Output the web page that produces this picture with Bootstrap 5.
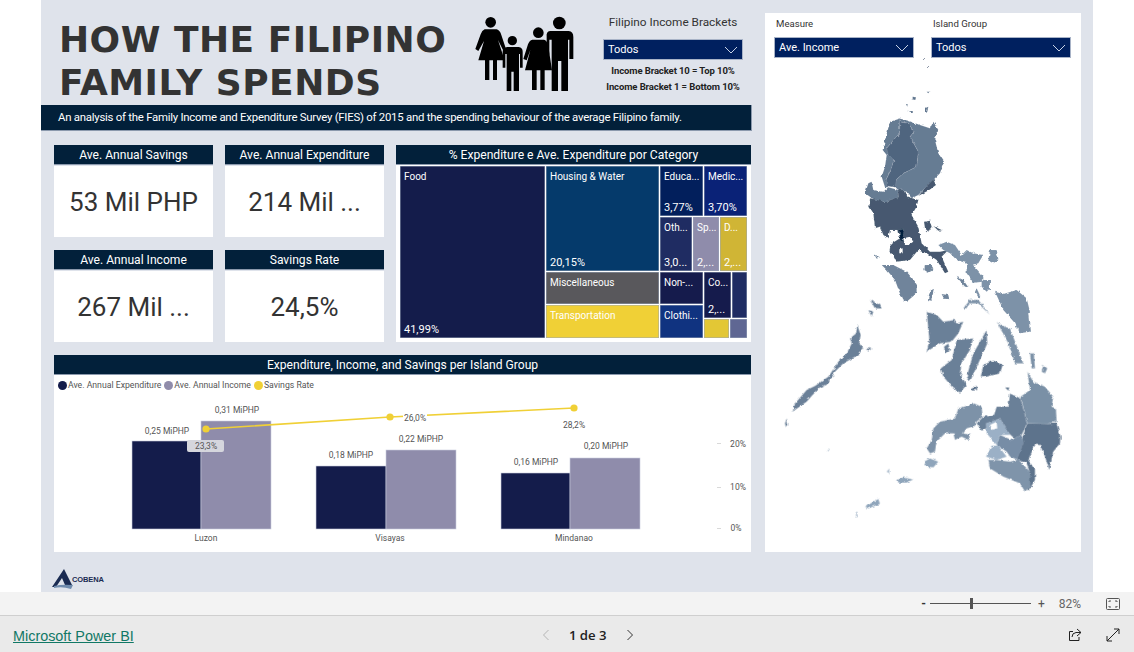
<!DOCTYPE html>
<html lang="en">
<head>
<meta charset="utf-8">
<title>How the Filipino Family Spends</title>
<link href="https://cdn.jsdelivr.net/npm/bootstrap@5.3.0/dist/css/bootstrap.min.css" rel="stylesheet">
<style>
html,body{height:652px;overflow:hidden;background:#fff;font-family:Roboto,"Liberation Sans",sans-serif;}
.report{height:592px;margin:0 41px;background:#dfe3eb;}
.left-col{width:711px;flex:none;}
.top-area{height:105px;}
.big-title{width:420px;padding:19px 0 0 18px;margin:0;font:700 36px/42.5px "DejaVu Sans",sans-serif;letter-spacing:.48px;color:#333;white-space:nowrap;}
.family{width:120px;height:95px;margin:5px 0 0 9px;flex:none;}
.bracket{width:140px;margin:14px 0 0 13px;flex:none;text-align:center;}
.bracket-label{font-size:11.8px;line-height:16px;color:#333;margin-bottom:9px;}
.note{font-size:9.5px;font-weight:700;line-height:16px;color:#222;letter-spacing:-.1px;white-space:nowrap;}
.note-first{margin-top:3px;}
.drop{height:21px;background:#00205f;border:1px solid #a8b3c7;color:#fff;font-size:11px;padding:2px 4px 0;}
.drop svg{width:14px;height:8px;margin-top:-2px;}
.banner{height:26px;background:#02203a;color:#fff;font-size:11.4px;padding-left:17px;letter-spacing:-.25px;border-right:1px solid #8b99ad;border-bottom:1px solid #8b99ad;}
.content{padding:14px 0 0 13px;gap:12px;}
.kpis{display:grid;grid-template-columns:159px 159px;grid-auto-rows:92px;column-gap:12px;row-gap:13px;}
.sec-head{height:20px;background:#02203a;color:#fff;font-size:12.1px;text-align:center;line-height:20px;border-bottom:1px solid #8b99ad;white-space:nowrap;flex:none;}
.kpi-val{flex:1;background:#fff;margin-top:1px;padding-top:2px;color:#333;font-size:26px;}
.tree-card{width:355px;height:197px;background:#fff;}
.tree{height:172px;margin:1px 4px 0;gap:1px;font-size:10px;color:#fff;}
.tile{padding:5px 4px 2px;display:flex;flex-direction:column;justify-content:space-between;overflow:hidden;white-space:nowrap;line-height:12px;box-shadow:inset 0 0 0 .5px #9aa6ba;min-width:0;flex:none;}
.tile b{font-weight:400;}
.tile i{font-style:normal;font-size:11px;}
.tgap{margin-top:1px;}
.lgap{margin-left:1px;}
.c-food{width:145px;background:#141c4b;}
.c-house{height:105px;background:#053a6b;}
.c-misc{height:32px;background:#59585c;}
.c-trans{height:33px;background:#f0d036;}
.c-edu{width:43px;height:50px;background:#021f5c;}
.c-med{width:43px;height:50px;background:#0a2277;}
.c-oth{width:32px;height:54px;background:#1f2c62;}
.c-sp{width:26px;height:54px;background:#8f8cab;}
.c-d{width:27px;height:54px;background:#d0b535;}
.c-non{height:32px;background:#151b4c;}
.c-clo{height:33px;background:#103380;}
.c-co{width:27px;height:46px;background:#151b4c;}
.c-sm{width:15px;height:46px;background:#1f2c62;}
.c-ye{width:25px;height:19px;background:#e3c735;}
.c-gr{width:17px;height:19px;background:#5f6793;}
.col-m{width:113px;flex:none;}
.col-r{width:87px;flex:none;}
.col-n{width:43px;flex:none;}
.chart-card{width:697px;height:197px;margin:13px 0 0 13px;background:#fff;}
.legend{height:21px;padding:0 0 0 4px;font-size:8.7px;color:#555;gap:3px;}
.dot{width:9px;height:9px;border-radius:50%;display:inline-block;margin-right:1px;}
.chart-svg{display:block;width:697px;height:156px;}
.chart-svg text{font-family:Roboto,"Liberation Sans",sans-serif;font-size:8.5px;fill:#555;}
.logo-row{padding:17px 0 0 11px;}
.logo-text{font:700 7.5px "Liberation Sans",sans-serif;color:#1a2b52;margin-left:-6px;margin-top:6px;letter-spacing:-.1px;}
.map-panel{width:316px;height:539px;margin:13px 0 0 13px;background:#fff;flex:none;}
.filters{padding:5px 10px 0 9px;gap:17px;}
.filter{width:140px;}
.filter-label{font-size:9.6px;line-height:12px;color:#333;padding-left:2px;margin-bottom:7px;}
.map-svg{display:block;width:316px;height:494px;}
.zoombar{height:24px;background:#f3f3f3;border-bottom:1px solid #cfcfcf;font-size:12px;color:#555;}
.zoom-minus{font-weight:700;color:#333;}
.zoom-pct{margin-left:14px;color:#666;}
.zoom-fit{margin:0 14px 0 25px;}
.footerbar{height:36px;background:#eaeaea;padding-top:2px;}
.pbi-link{color:#117865;font:14.4px "Liberation Sans",sans-serif;text-decoration:underline;margin-left:13px;padding-top:1px;}
.pager{font:600 13.2px "Open Sans",sans-serif;color:#222;}
.pager-wrap{width:100px;margin-left:404px;gap:19px;}
.tools{margin-right:14px;}
.slider{width:101px;height:11px;position:relative;margin:0 7px 0 4px;}
.slider::before{content:"";position:absolute;left:0;right:0;top:5px;height:1px;background:#555;}
.slider::after{content:"";position:absolute;left:40px;top:0;width:3px;height:11px;background:#555;box-shadow:10px 3px 0 -2px #555;}
</style>
</head>
<body>
<main class="report d-flex">
  <section class="left-col">
    <header class="top-area d-flex">
      <h1 class="big-title">HOW THE FILIPINO<br>FAMILY SPENDS</h1>
      <svg class="family" viewBox="0 0 360 285" fill="#000" aria-hidden="true">
        <circle cx="62" cy="52" r="16"/>
        <path d="M44 73H80Q90 76 94 90L108 132L100 137L84 105L104 166H81V225H69V166H58V225H45V166H25L42 108L25 138L16 132L32 88Q36 76 44 73Z"/>
        <circle cx="127" cy="107" r="14"/>
        <path d="M112 126H146Q158 128 158 140V188H150V147H147V258H131V200H124V258H110V147H106V188H98V140Q98 128 112 126Z"/>
        <circle cx="205" cy="83" r="16"/>
        <path d="M187 104H222Q230 106 234 118L246 196H224V255H211V196H200V255H186V196H165L181 135L170 166L160 162L174 118Q178 106 187 104Z"/>
        <circle cx="268" cy="54" r="19"/>
        <path d="M240 78H296Q310 80 310 96V162H298V104H294V258H274V168H264V258H245V104H238V150L230 130V96Q228 80 240 78Z"/>
      </svg>
      <div class="bracket">
        <div class="bracket-label">Filipino Income Brackets</div>
        <div class="drop d-flex align-items-center justify-content-between"><span>Todos</span><svg viewBox="0 0 14 8" fill="none" stroke="#c9d3e6"><path d="M1 1L7 7L13 1"/></svg></div>
        <div class="note note-first">Income Bracket 10 = Top 10%</div>
        <div class="note">Income Bracket 1 = Bottom 10%</div>
      </div>
    </header>
    <div class="banner d-flex align-items-center">An analysis of the Family Income and Expenditure Survey (FIES) of 2015 and the spending behaviour of the average Filipino family.</div>

    <div class="content d-flex">
      <div class="kpis">
        <div class="d-flex flex-column"><div class="sec-head">Ave. Annual Savings</div><div class="kpi-val d-flex align-items-center justify-content-center">53 Mil PHP</div></div>
        <div class="d-flex flex-column"><div class="sec-head">Ave. Annual Expenditure</div><div class="kpi-val d-flex align-items-center justify-content-center">214 Mil ...</div></div>
        <div class="d-flex flex-column"><div class="sec-head">Ave. Annual Income</div><div class="kpi-val d-flex align-items-center justify-content-center">267 Mil ...</div></div>
        <div class="d-flex flex-column"><div class="sec-head">Savings Rate</div><div class="kpi-val d-flex align-items-center justify-content-center">24,5%</div></div>
      </div>
      <div class="tree-card">
        <div class="sec-head">% Expenditure e Ave. Expenditure por Category</div>
        <div class="tree d-flex">
          <div class="tile c-food"><b>Food</b><i>41,99%</i></div>
          <div class="col-m d-flex flex-column">
            <div class="tile c-house"><b>Housing &amp; Water</b><i>20,15%</i></div>
            <div class="tile c-misc tgap"><b>Miscellaneous</b></div>
            <div class="tile c-trans tgap"><b>Transportation</b></div>
          </div>
          <div class="col-r d-flex flex-column">
            <div class="d-flex"><div class="tile c-edu"><b>Educa...</b><i>3,77%</i></div><div class="tile c-med lgap"><b>Medic...</b><i>3,70%</i></div></div>
            <div class="d-flex tgap"><div class="tile c-oth"><b>Oth...</b><i>3,0...</i></div><div class="tile c-sp lgap"><b>Sp...</b><i>2,...</i></div><div class="tile c-d lgap"><b>D...</b><i>2,...</i></div></div>
            <div class="d-flex tgap">
              <div class="col-n d-flex flex-column">
                <div class="tile c-non"><b>Non-...</b></div>
                <div class="tile c-clo tgap"><b>Clothi...</b></div>
              </div>
              <div class="lgap">
                <div class="d-flex"><div class="tile c-co"><b>Co...</b><i>2,...</i></div><div class="tile c-sm lgap"></div></div>
                <div class="d-flex tgap"><div class="tile c-ye"></div><div class="tile c-gr lgap"></div></div>
              </div>
            </div>
          </div>
        </div>
      </div>
    </div>

    <div class="chart-card">
      <div class="sec-head">Expenditure, Income, and Savings per Island Group</div>
      <div class="legend d-flex align-items-center">
        <span class="d-flex align-items-center"><span class="dot" style="background:#141c4b"></span>Ave. Annual Expenditure</span>
        <span class="d-flex align-items-center"><span class="dot" style="background:#8f8cab"></span>Ave. Annual Income</span>
        <span class="d-flex align-items-center"><span class="dot" style="background:#f0d036"></span>Savings Rate</span>
      </div>
      <svg class="chart-svg" viewBox="54 396 697 156">
        <g stroke="#c9cede" stroke-width=".6">
          <rect x="132" y="441" width="69" height="88" fill="#141c4b"/>
          <rect x="201" y="421" width="70" height="108" fill="#8f8cab"/>
          <rect x="316" y="466" width="70" height="63" fill="#141c4b"/>
          <rect x="386" y="450" width="70" height="79" fill="#8f8cab"/>
          <rect x="501" y="473" width="69" height="56" fill="#141c4b"/>
          <rect x="570" y="458" width="70" height="71" fill="#8f8cab"/>
        </g>
        <polyline points="206,429 390,417 574,408" fill="none" stroke="#f0d036" stroke-width="1.6"/>
        <circle cx="206" cy="429" r="3.6" fill="#f0d036"/><circle cx="390" cy="417" r="3.6" fill="#f0d036"/><circle cx="574" cy="408" r="3.6" fill="#f0d036"/>
        <rect x="403" y="412" width="24" height="11" fill="#fff"/>
        <rect x="187" y="440" width="37" height="12" rx="2" fill="#d5d6dd"/>
        <g text-anchor="middle">
          <text x="167" y="434">0,25 MiPHP</text>
          <text x="237" y="413">0,31 MiPHP</text>
          <text x="206" y="449">23,3%</text>
          <text x="351" y="458">0,18 MiPHP</text>
          <text x="421" y="442">0,22 MiPHP</text>
          <text x="415" y="421">26,0%</text>
          <text x="536" y="465">0,16 MiPHP</text>
          <text x="606" y="449">0,20 MiPHP</text>
          <text x="574" y="428">28,2%</text>
          <text x="206" y="541">Luzon</text>
          <text x="390" y="541">Visayas</text>
          <text x="574" y="541">Mindanao</text>
          <text x="738" y="447">20%</text>
          <text x="738" y="490">10%</text>
          <text x="736" y="531">0%</text>
        </g>
        <path d="M717 443.500h4M717 487.500h4M717 528.500h4" stroke="#d9d9d9"/>
      </svg>
    </div>

    <div class="logo-row d-flex align-items-start">
      <svg width="26" height="20" viewBox="0 0 26 20" aria-hidden="true">
        <path d="M12 0L20 16H13L10 9L4 18H0Z" fill="#1a2b52"/>
        <path d="M2 17Q10 15 21 16L19 20Q10 17 2 19Z" fill="#6f8bad"/>
      </svg>
      <span class="logo-text">COBENA</span>
    </div>
  </section>

  <aside class="map-panel">
    <div class="filters d-flex">
      <div class="filter">
        <div class="filter-label">Measure</div>
        <div class="drop d-flex align-items-center justify-content-between"><span>Ave. Income</span><svg viewBox="0 0 14 8" fill="none" stroke="#c9d3e6"><path d="M1 1L7 7L13 1"/></svg></div>
      </div>
      <div class="filter">
        <div class="filter-label">Island Group</div>
        <div class="drop d-flex align-items-center justify-content-between"><span>Todos</span><svg viewBox="0 0 14 8" fill="none" stroke="#c9d3e6"><path d="M1 1L7 7L13 1"/></svg></div>
      </div>
    </div>
    <svg class="map-svg" viewBox="765 58 316 494" aria-label="Map of the Philippines">
      <defs>
        <filter id="rough" filterUnits="userSpaceOnUse" x="765" y="58" width="316" height="494">
          <feTurbulence type="fractalNoise" baseFrequency=".28" numOctaves="2" seed="4" result="n"/>
          <feDisplacementMap in="SourceGraphic" in2="n" scale="3.2" xChannelSelector="R" yChannelSelector="G"/>
          <feGaussianBlur stdDeviation=".3"/>
        </filter>
      </defs>
      <g filter="url(#rough)">
      <path d="M923 60l2-2M927 68l2-2" stroke="#8b95a5"/>
      <g transform="translate(770 90) scale(.3333)" stroke="#fff" stroke-opacity=".35" stroke-width=".9" stroke-linejoin="round">
        <g fill="#5d738c"><path d="M425 20L438 22L436 30L425 28Z"/><path d="M470 5L478 5L475 10Z"/><path d="M408 42L413 42L412 50Z"/><path d="M415 63L432 63L425 67Z"/><path d="M465 55L475 50L472 65L465 68Z"/></g>
        <path fill="#667b93" d="M385 85L415 92L450 105L480 115L490 95L505 120L495 150L505 190L522 215L510 250L490 270L470 290L445 315L425 325L405 300L385 300L372 288L380 268L400 250L440 230L445 185L420 140L432 125L415 100L390 95Z"/>
        <path fill="#46596f" d="M470 288L490 268L498 285L478 300L445 318Z"/>
        <path fill="#667b93" d="M360 95L388 86L390 95L388 135L375 145L350 175L372 210L360 245L348 270L355 292L345 292L335 260L345 230L350 195L338 180L345 150Z"/>
        <path fill="#50657f" d="M390 95L415 100L432 125L420 140L445 185L440 230L400 250L380 268L375 292L350 288L348 270L360 245L372 210L355 195L350 175L375 145L388 135Z"/>
        <path fill="#667b93" d="M295 280L305 275L310 300L340 305L355 292L385 300L385 325L345 335L320 340L300 320L285 310Z"/>
        <path fill="#46596f" d="M300 325L345 335L385 322L384 300L405 300L412 320L445 330L440 350L425 375L430 385L445 410L455 460L480 485L510 485L535 480L515 500L535 545L525 550L500 510L470 490L445 480L420 510L380 515L370 495L358 485L362 462L390 445L385 420L360 420L355 445L340 435L330 410L315 415L310 370L298 350Z"/>
        <path fill="#fff" stroke="none" d="M400 445L420 440L430 455L415 465L405 465Z"/><path fill="#fff" stroke="none" d="M388 478L398 475L398 490L388 490Z"/>
        <path fill="#021f3c" d="M388 420L402 418L398 455L390 450Z"/>
        <path fill="#46596f" d="M462 395L480 392L485 410L475 425L465 415Z"/>
        <path fill="#46596f" d="M490 408L515 420L505 422Z"/>
        <path fill="#7d92a8" d="M505 465L530 455L555 465L575 495L590 480L610 490L640 495L625 520L610 525L640 560L640 575L610 578L590 550L590 520L560 510L540 490L520 480Z"/>
        <path fill="#7d92a8" d="M660 480L680 480L685 510L670 520L655 512Z"/>
        <path fill="#7d92a8" d="M635 570L660 570L660 595L650 605L635 590Z"/>
        <path fill="#6f849b" d="M335 525L370 525L410 545L440 580L440 610L410 635L395 625L375 570L350 540Z"/>
        <path fill="#6f849b" d="M465 525L485 525L490 540L475 548L463 540Z"/>
        <path fill="#6f849b" d="M312 492L330 502L320 506Z"/>
        <path fill="#6f849b" d="M560 560L580 570L595 592L585 590Z"/>
        <path fill="#6f849b" d="M480 600L492 598L484 632L474 630Z"/>
        <path fill="#6f849b" d="M515 612L535 615L538 628L522 626Z"/>
        <path fill="#7d92a8" d="M675 605L700 612L740 600L770 625L780 665L775 670L780 725L750 730L735 700L700 660Z"/>
        <path fill="#7d92a8" d="M620 595L632 620L625 622L615 605Z"/>
      </g>
      <g transform="translate(770 300) scale(.3333)" stroke="#fff" stroke-opacity=".35" stroke-width=".9" stroke-linejoin="round">
        <path fill="#7d92a8" d="M580 25L600 0L625 0L660 45L625 10L600 10L585 30Z"/>
        <path fill="#6b8098" d="M470 35L500 45L520 65L555 60L560 70L580 65L565 100L545 125L510 130L470 155L478 120Z"/>
        <path fill="#6b8098" d="M522 140L535 130L540 150L525 160Z"/>
        <path fill="#6b8098" d="M560 120L610 115L600 150L575 190L570 220L590 255L570 278L550 265L520 230L512 205L545 180Z"/>
        <path fill="#6b8098" d="M650 90L652 130L625 190L600 245L590 230L610 160Z"/>
        <path fill="#5d738c" d="M640 195L670 182L698 195L690 220L650 230L632 232Z"/>
        <path fill="#7d92a8" d="M690 75L720 85L745 150L760 190L735 190L715 130L680 65Z"/>
        <path fill="#7d92a8" d="M780 160L792 160L795 205L785 205ZM820 195L832 205L825 220L815 215Z"/>
        <path fill="#5d738c" d="M605 262L620 258L622 270L605 272ZM705 262L718 262L715 272Z"/>
        <path fill="#6b8098" d="M45 370L50 355L55 375L48 382Z"/>
        <path fill="#6b8098" d="M68 335L75 310L110 270L135 258L175 230L205 185L230 160L245 130L240 115L258 100L262 75L272 105L268 130L280 145L265 165L220 190L195 215L175 250L145 265L110 305L75 330Z"/>
        <path fill="#6b8098" d="M288 145L305 145L295 155Z"/>
        <path fill="#6b8098" d="M300 0L330 15L335 25L315 25ZM295 30L310 35L305 50Z"/>
        <path fill="#7d92a8" d="M470 445L485 420L490 385L510 365L555 355L565 325L600 315L612 310L635 320L638 350L620 365L615 378L590 385L580 400L600 405L595 420L575 410L555 420L550 400L525 400L500 425L495 455L480 460Z"/>
        <path fill="#6b8098" d="M620 370L640 350L672 345L680 320L715 320L720 280L752 295L772 370L755 405L735 417L700 385L690 355L660 370L650 385L635 392Z"/>
        <path fill="#7a90a6" d="M772 215L790 245L825 260L850 290L845 320L858 325L860 365L835 372L772 370L752 290L780 270Z"/>
        <path fill="#5d738c" d="M772 370L835 372L860 370L872 410L870 430L850 455L838 510L825 470L810 435L795 435L775 480L795 510L795 540L775 575L770 555L780 520L770 490L740 478L760 405Z"/>
        <path fill="#9bb0c6" d="M648 370L690 355L720 405L690 405L680 435L650 400Z"/>
        <path fill="#fff" stroke="none" d="M660 375L680 365L682 385L665 390Z"/>
        <path fill="#778da6" d="M690 405L725 420L755 405L760 430L740 478L720 470L710 455L680 435Z"/>
        <path fill="#9bb0c6" d="M665 437L685 437L710 470L680 480L648 470Z"/>
        <path fill="#7f94aa" d="M655 480L680 480L720 485L745 478L780 515L780 560L765 575L750 550L700 530L660 505Z"/>
        <path fill="#8fa5bb" d="M462 485L480 475L505 485L490 502L470 500Z"/>
        <path fill="#8fa5bb" d="M382 540L400 532L430 538L410 548L385 548Z"/>
        <path fill="#8fa5bb" d="M285 620L325 597L330 612L295 625Z"/>
        <path fill="#a9bacb" d="M258 635L262 635L262 652L258 652ZM172 450L180 450L176 455ZM350 515L358 505L358 520Z"/>
      </g>
      </g>
    </svg>
  </aside>
</main>

<div class="zoombar d-flex align-items-center justify-content-end">
  <span class="zoom-minus">-</span>
  <div class="slider"></div>
  <span>+</span>
  <span class="zoom-pct">82%</span>
  <svg class="zoom-fit" width="14" height="12" viewBox="0 0 14 12" fill="none" stroke="#555"><rect x=".5" y=".5" width="13" height="11" rx="1"/><path d="M3 4V3H5M9 3H11V4M11 8V9H9M5 9H3V8"/></svg>
</div>
<footer class="footerbar d-flex align-items-center">
  <a class="pbi-link" href="#">Microsoft Power BI</a>
  <div class="pager-wrap d-flex align-items-center justify-content-center">
    <svg width="8" height="12" viewBox="0 0 8 12" fill="none" stroke="#b5b5b5"><path d="M6.500 1L1.500 6L6.500 11"/></svg>
    <span class="pager text-nowrap">1 de 3</span>
    <svg width="8" height="12" viewBox="0 0 8 12" fill="none" stroke="#333"><path d="M1.500 1L6.500 6L1.500 11"/></svg>
  </div>
  <div class="tools ms-auto d-flex align-items-center gap-4">
    <svg width="14" height="14" viewBox="0 0 14 14" fill="none" stroke="#222"><path d="M9 1L13 4.500L9 8M13 4.500H8Q4 5 4 9M11 9V12.500H1.500V3.500H5"/></svg>
    <svg width="14" height="14" viewBox="0 0 14 14" fill="none" stroke="#222"><path d="M8 1H13V6M13 1L1 13M1 8V13H6"/></svg>
  </div>
</footer>
<script src="https://cdn.jsdelivr.net/npm/bootstrap@5.3.0/dist/js/bootstrap.bundle.min.js"></script>
</body>
</html>
